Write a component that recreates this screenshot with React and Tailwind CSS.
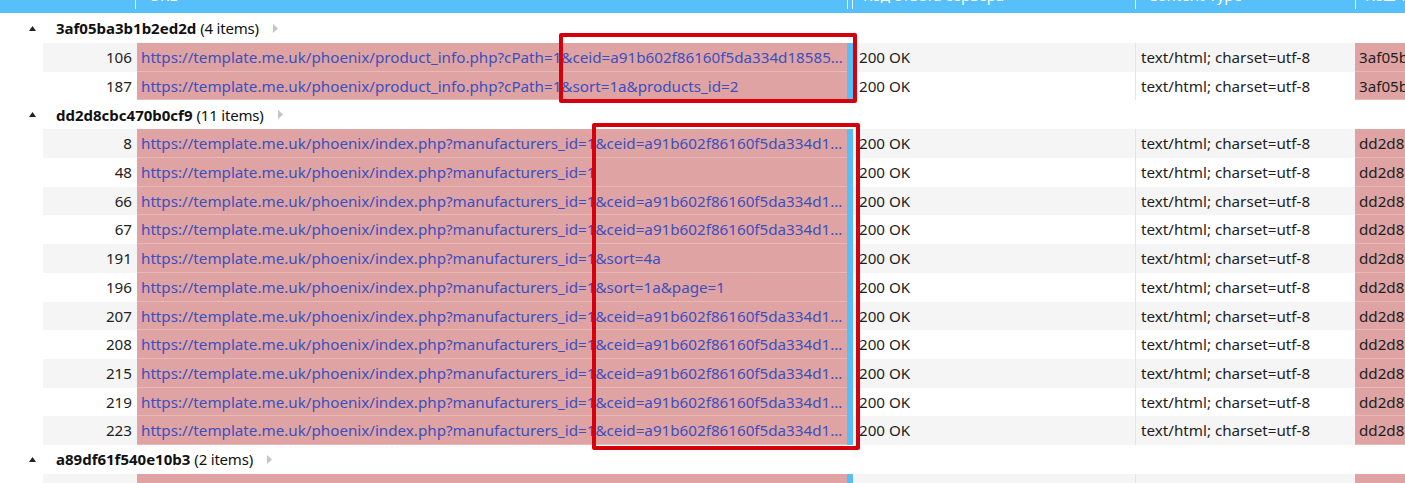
import React from 'react';

const font = { fontFamily: '"Noto Sans", "Open Sans", sans-serif' };

const base = 'https://template.me.uk/phoenix/';
const ceid = '&ceid=a91b602f86160f5da334d18585f1c2e9b0d3a7e4';

const groups = [
  {
    hash: '3af05ba3b1b2ed2d',
    count: 4,
    rows: [
      [106, base + 'product_info.php?cPath=1' + ceid + '&products_id=2'],
      [187, base + 'product_info.php?cPath=1&sort=1a&products_id=2'],
    ],
  },
  {
    hash: 'dd2d8cbc470b0cf9',
    count: 11,
    rows: [
      [8, base + 'index.php?manufacturers_id=1' + ceid],
      [48, base + 'index.php?manufacturers_id=1'],
      [66, base + 'index.php?manufacturers_id=1' + ceid + '&sort=2a'],
      [67, base + 'index.php?manufacturers_id=1' + ceid + '&sort=1a'],
      [191, base + 'index.php?manufacturers_id=1&sort=4a'],
      [196, base + 'index.php?manufacturers_id=1&sort=1a&page=1'],
      [207, base + 'index.php?manufacturers_id=1' + ceid + '&page=2'],
      [208, base + 'index.php?manufacturers_id=1' + ceid + '&page=1'],
      [215, base + 'index.php?manufacturers_id=1' + ceid + '&sort=3a'],
      [219, base + 'index.php?manufacturers_id=1' + ceid + '&sort=4d'],
      [223, base + 'index.php?manufacturers_id=1' + ceid + '&sort=2d'],
    ],
  },
  {
    hash: 'a89df61f540e10b3',
    count: 2,
    rows: [[0, '']],
  },
];

const Row = ({ num, url, hash, odd }) => {
  const bg = odd ? 'bg-[#f5f5f5]' : 'bg-white';
  return (
    <div className="flex h-[28.7px] text-[15.2px]">
      <div className="w-[43px] shrink-0 bg-white" />
      <div className={`w-[94px] shrink-0 ${bg} pr-[5px] text-right text-[#1e1e1e] leading-[28px]`}>
        {num || ''}
      </div>
      <div className="w-[710px] shrink-0 bg-[#e0a3a3] border-b border-[#e8b9b9] pl-[4px] pr-[2px] text-[#3b4fbf] leading-[28px] whitespace-nowrap overflow-hidden text-ellipsis">
        {url}
      </div>
      <div className="w-[6px] shrink-0 bg-[#56bff9]" />
      <div className={`w-[282px] shrink-0 ${bg} pl-[6px] text-[#1e1e1e] leading-[28px]`}>
        {num ? '200 OK' : ''}
      </div>
      <div className={`w-[220px] shrink-0 ${bg} border-l border-[#e4e4e4] pl-[5px] text-[#1e1e1e] leading-[28px] whitespace-nowrap`}>
        {num ? 'text/html; charset=utf-8' : ''}
      </div>
      <div className="flex-1 bg-[#e0a3a3] border-b border-[#e8b9b9] pl-[4px] text-[#1e1e1e] leading-[28px] whitespace-nowrap overflow-hidden">
        {num ? hash : ''}
      </div>
    </div>
  );
};

const GroupHeader = ({ hash, count, first }) => (
  <div className={`flex items-center ${first ? 'h-[30px]' : 'h-[29px]'} text-[15px] text-[#111]`}>
    <div className="w-[56px] shrink-0 flex justify-end pr-[20px]">
      <svg width="7" height="5" viewBox="0 0 7 5">
        <polygon points="3.5,0 7,5 0,5" fill="#222" />
      </svg>
    </div>
    <span className="font-bold">{hash}</span>
    <span className="ml-[4px] tracking-[-0.2px]">({count} items)</span>
    <svg className="ml-[14px]" width="5" height="9" viewBox="0 0 5 9">
      <polygon points="0,0 5,4.5 0,9" fill="#c4c4c4" />
    </svg>
  </div>
);

const HeaderBar = () => (
  <div className="h-[13px] overflow-hidden bg-[#57c0fb]">
    <div className="flex -mt-[19px] h-[28px] text-[15px] text-white leading-[28px]">
      <div className="w-[136px] shrink-0 border-r border-white/90" />
      <div className="w-[711px] shrink-0 pl-[13px]">URL</div>
      <div className="w-[6px] shrink-0 border-l border-white/90 border-r" />
      <div className="w-[282px] shrink-0 pl-[10px] whitespace-nowrap">Код ответа сервера</div>
      <div className="w-[220px] shrink-0 border-l border-white/90 pl-[12px] whitespace-nowrap">Content-Type</div>
      <div className="flex-1 border-l border-white/90 pl-[10px] whitespace-nowrap">Хеш тела</div>
    </div>
  </div>
);

export default function App() {
  return (
    <div className="relative w-[1405px] h-[483px] overflow-hidden bg-white" style={font}>
      <HeaderBar />
      {groups.map((g, gi) => (
        <div key={g.hash}>
          <GroupHeader hash={g.hash} count={g.count} first={gi === 0} />
          {g.rows.map(([num, url], i) => (
            <Row key={i} num={num} url={url} hash={g.hash} odd={i % 2 === 0} />
          ))}
        </div>
      ))}
      <div className="absolute left-[559px] top-[33px] w-[298px] h-[70px] border-[4px] border-[#d6000c] rounded-[2px]" />
      <div className="absolute left-[592px] top-[123px] w-[268px] h-[327px] border-[4px] border-[#d6000c] rounded-[2px]" />
    </div>
  );
}
